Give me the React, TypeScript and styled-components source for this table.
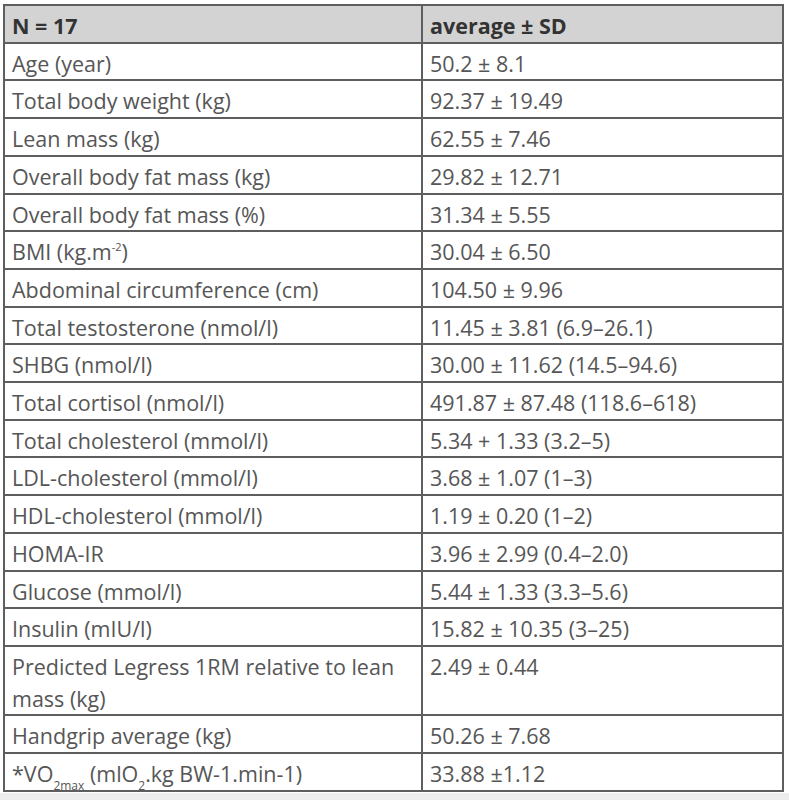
import React from "react";
import styled, { createGlobalStyle } from "styled-components";

const Global = createGlobalStyle`
  html, body { margin: 0; padding: 0; background: #ededed; }
  body { font-family: "Open Sans", "Liberation Sans", sans-serif; }
`;

const Page = styled.div`
  background: #ffffff;
  width: 789px;
  height: 793px;
  padding: 4px 0 0 3px;
  box-sizing: border-box;
`;

const Table = styled.table`
  border-collapse: collapse;
  width: 781px;
  table-layout: fixed;
  font-size: 21.5px;
  color: #565656;
`;

const HeadCell = styled.th<{ $w?: number }>`
  background: #d3d3d3;
  color: #333;
  font-weight: 700;
  text-align: left;
  border: 2px solid #5e5e5e;
  padding: 4px 8px 0 7px;
  line-height: 31.7px;
  width: ${(p) => (p.$w ? `${p.$w}px` : "auto")};
`;

const Cell = styled.td`
  border: 2px solid #5e5e5e;
  padding: 4px 8px 0 7px;
  line-height: 31.7px;
  vertical-align: top;
  font-weight: 400;
`;

const Sup = styled.sup`
  font-size: 11px;
  vertical-align: 9px;
  line-height: 0;
`;

const Sub = styled.sub`
  font-size: 12px;
  vertical-align: -8px;
  line-height: 0;
`;

type Row = { label: React.ReactNode; value: string };

const rows: Row[] = [
  { label: "Age (year)", value: "50.2 ± 8.1" },
  { label: "Total body weight (kg)", value: "92.37 ± 19.49" },
  { label: "Lean mass (kg)", value: "62.55 ± 7.46" },
  { label: "Overall body fat mass (kg)", value: "29.82 ± 12.71" },
  { label: "Overall body fat mass (%)", value: "31.34 ± 5.55" },
  {
    label: (
      <>
        BMI (kg.m<Sup>-2</Sup>)
      </>
    ),
    value: "30.04 ± 6.50",
  },
  { label: "Abdominal circumference (cm)", value: "104.50 ± 9.96" },
  { label: "Total testosterone (nmol/l)", value: "11.45 ± 3.81 (6.9–26.1)" },
  { label: "SHBG (nmol/l)", value: "30.00 ± 11.62 (14.5–94.6)" },
  { label: "Total cortisol (nmol/l)", value: "491.87 ± 87.48 (118.6–618)" },
  { label: "Total cholesterol (mmol/l)", value: "5.34 + 1.33 (3.2–5)" },
  { label: "LDL-cholesterol (mmol/l)", value: "3.68 ± 1.07 (1–3)" },
  { label: "HDL-cholesterol (mmol/l)", value: "1.19 ± 0.20 (1–2)" },
  { label: "HOMA-IR", value: "3.96 ± 2.99 (0.4–2.0)" },
  { label: "Glucose (mmol/l)", value: "5.44 ± 1.33 (3.3–5.6)" },
  { label: "Insulin (mIU/l)", value: "15.82 ± 10.35 (3–25)" },
  { label: "Predicted Legress 1RM relative to lean mass (kg)", value: "2.49 ± 0.44" },
  { label: "Handgrip average (kg)", value: "50.26 ± 7.68" },
  {
    label: (
      <>
        *VO<Sub>2max</Sub> (mlO<Sub>2</Sub>.kg BW-1.min-1)
      </>
    ),
    value: "33.88 ±1.12",
  },
];

export default function App() {
  return (
    <>
      <Global />
      <Page>
        <Table>
          <thead>
            <tr>
              <HeadCell $w={401}>N = 17</HeadCell>
              <HeadCell>average ± SD</HeadCell>
            </tr>
          </thead>
          <tbody>
            {rows.map((r, i) => (
              <tr key={i}>
                <Cell>{r.label}</Cell>
                <Cell>{r.value}</Cell>
              </tr>
            ))}
          </tbody>
        </Table>
      </Page>
    </>
  );
}
